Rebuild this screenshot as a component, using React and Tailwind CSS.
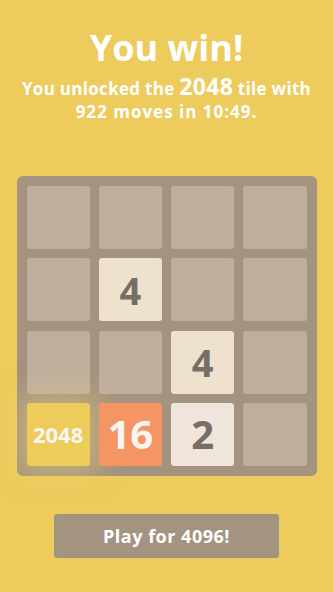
import React from 'react';

const BOARD = [
  [0, 0, 0, 0],
  [0, 4, 0, 0],
  [0, 0, 4, 0],
  [2048, 16, 2, 0],
];

const TILE_STYLE = {
  0: 'bg-[#bfae9e]',
  2: 'bg-[#efe5da] text-[#776e65] text-[40px]',
  4: 'bg-[#eee2cf] text-[#776e65] text-[38px]',
  16: 'bg-[#f59563] text-[#f9f6f2] text-[40px]',
  2048: 'bg-[#edcc5c] text-[#f9f6f2] text-[22px] shadow-[0_0_30px_8px_rgba(243,215,116,0.45)]',
};

function Tile({ value }) {
  return (
    <div
      className={`h-[63px] rounded-[3px] flex items-center justify-center font-bold leading-none ${TILE_STYLE[value]}`}
    >
      {value ? value : null}
    </div>
  );
}

export default function App() {
  return (
    <div
      className="w-[333px] h-[592px] bg-[#edcb5d] flex flex-col items-center overflow-hidden"
      style={{ fontFamily: '"Open Sans", "Noto Sans", sans-serif' }}
    >
      <h1 className="mt-[24px] text-[36px] font-bold text-white leading-[48px]">You win!</h1>
      <p className="mt-[3px] text-[17px] font-bold text-white text-center leading-[23px] tracking-[0.3px] whitespace-nowrap">
        You unlocked the <span className="text-[23px]">2048</span> tile with
        <br />
        <span className="tracking-[1px]">922 moves in 10:49.</span>
      </p>

      <div className="mt-[53px] w-[300px] h-[300px] rounded-[6px] bg-[#a3937f] p-[10px] grid grid-cols-4 gap-[9px] content-between">
        {BOARD.flat().map((v, i) => (
          <Tile key={i} value={v} />
        ))}
      </div>

      <button className="mt-[38px] w-[225px] h-[44px] rounded-[3px] bg-[#a39381] text-white text-[18px] font-bold tracking-[0.5px]">
        Play for 4096!
      </button>
    </div>
  );
}
